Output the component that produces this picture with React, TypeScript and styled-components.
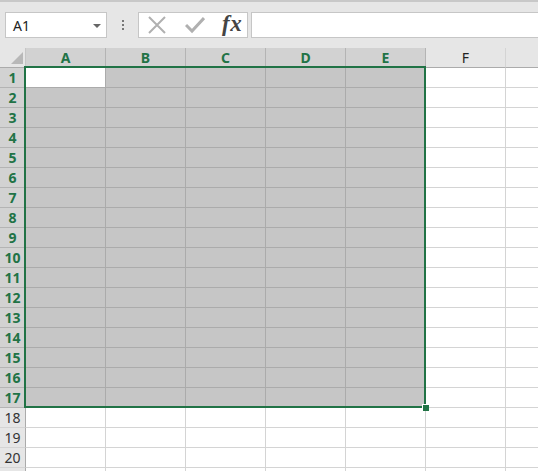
import React from "react";
import styled, { createGlobalStyle } from "styled-components";

const Global = createGlobalStyle`
  html, body { margin: 0; padding: 0; }
  body {
    width: 538px; height: 471px; overflow: hidden;
    background: #ffffff;
    font-family: "Noto Sans", "Open Sans", sans-serif;
  }
`;

const Page = styled.div`
  position: relative;
  width: 538px;
  height: 471px;
  overflow: hidden;
`;

const Toolbar = styled.div`
  height: 48px;
  box-sizing: border-box;
  background: #e6e6e6;
  border-top: 2px solid #c8c8c8;
  display: flex;
  align-items: flex-start;
  padding: 10px 0 0 5px;
`;

const NameBox = styled.div`
  width: 102px;
  height: 26px;
  box-sizing: border-box;
  background: #fff;
  border: 1px solid #c6c6c6;
  display: flex;
  align-items: center;
  justify-content: space-between;
  padding: 0 5px 0 7px;
  font-size: 14px;
  color: #222;
`;

const Caret = styled.span`
  width: 0;
  height: 0;
  border-left: 4px solid transparent;
  border-right: 4px solid transparent;
  border-top: 4px solid #666;
  margin-top: 1px;
`;

const Dots = styled.div`
  width: 31px;
  height: 26px;
  display: flex;
  flex-direction: column;
  align-items: center;
  justify-content: center;
  gap: 2px;
  span {
    width: 2px;
    height: 2px;
    background: #777;
  }
`;

const FxBox = styled.div`
  width: 110px;
  height: 26px;
  box-sizing: border-box;
  background: #fff;
  border: 1px solid #c6c6c6;
  display: flex;
  align-items: center;
  padding-left: 8px;
  gap: 18px;
`;

const Fx = styled.span`
  font-family: "Liberation Serif", "DejaVu Serif", serif;
  font-style: italic;
  font-weight: 700;
  font-size: 23px;
  color: #444;
  line-height: 1;
  margin-left: -1px;
  margin-top: -3px;
  letter-spacing: 0.5px;
`;

const FormulaInput = styled.div`
  flex: 1;
  height: 26px;
  margin-left: 3px;
  box-sizing: border-box;
  background: #fff;
  border: 1px solid #c6c6c6;
  border-right: none;
`;

const Grid = styled.div`
  display: grid;
  grid-template-columns: 26px repeat(7, 80px);
  grid-auto-rows: 20px;
`;

const Corner = styled.div`
  position: relative;
  background: #e6e6e6;
  box-sizing: border-box;
  border-bottom: 1px solid #ababab;
  border-right: 1px solid #c6c6c6;
  &::after {
    content: "";
    position: absolute;
    right: 2px;
    bottom: 3px;
    width: 0;
    height: 0;
    border-left: 12px solid transparent;
    border-bottom: 12px solid #b8b8b8;
  }
`;

const ColHead = styled.div<{ $sel: boolean }>`
  box-sizing: border-box;
  background: ${(p) => (p.$sel ? "#d2d2d2" : "#e6e6e6")};
  border-bottom: 1px solid #ababab;
  border-right: 1px solid ${(p) => (p.$sel ? "#b4b4b4" : "#d4d4d4")};
  display: flex;
  align-items: center;
  justify-content: center;
  font-size: 14px;
  font-weight: ${(p) => (p.$sel ? 700 : 400)};
  color: ${(p) => (p.$sel ? "#217346" : "#222")};
  padding-bottom: 1px;
`;

const RowHead = styled.div<{ $sel: boolean }>`
  box-sizing: border-box;
  background: ${(p) => (p.$sel ? "#d2d2d2" : "#e6e6e6")};
  border-bottom: 1px solid ${(p) => (p.$sel ? "#b4b4b4" : "#d4d4d4")};
  border-right: 1px solid #ababab;
  display: flex;
  align-items: center;
  justify-content: center;
  font-size: 14px;
  font-weight: ${(p) => (p.$sel ? 700 : 400)};
  color: ${(p) => (p.$sel ? "#217346" : "#333")};
  padding-bottom: 1px;
`;

const Cell = styled.div<{ $sel: boolean; $active: boolean }>`
  box-sizing: border-box;
  background: ${(p) => (p.$active ? "#ffffff" : p.$sel ? "#c6c6c6" : "#ffffff")};
  border-bottom: 1px solid ${(p) => (p.$sel ? "#ababab" : "#d4d4d4")};
  border-right: 1px solid ${(p) => (p.$sel ? "#ababab" : "#d4d4d4")};
`;

const Selection = styled.div`
  position: absolute;
  left: 24px;
  top: 66px;
  width: 402px;
  height: 342px;
  box-sizing: border-box;
  border: 2px solid #217346;
  pointer-events: none;
`;

const Handle = styled.div`
  position: absolute;
  left: 422px;
  top: 404px;
  width: 7px;
  height: 7px;
  box-sizing: border-box;
  background: #217346;
  border-left: 1px solid #fff;
  border-top: 1px solid #fff;
`;

const XIcon = () => (
  <svg width="20" height="20" viewBox="0 0 20 20">
    <path d="M2 2 L18 18 M18 2 L2 18" stroke="#b0b0b0" strokeWidth="2" fill="none" />
  </svg>
);

const CheckIcon = () => (
  <svg width="20" height="20" viewBox="0 0 20 20">
    <path d="M1 10 L7 16 L19 3" stroke="#b0b0b0" strokeWidth="3" fill="none" />
  </svg>
);

const cols = ["A", "B", "C", "D", "E", "F", "G"];
const rows = Array.from({ length: 21 }, (_, i) => i + 1);

export default function App() {
  return (
    <Page>
      <Global />
      <Toolbar>
        <NameBox>
          A1
          <Caret />
        </NameBox>
        <Dots>
          <span />
          <span />
          <span />
        </Dots>
        <FxBox>
          <XIcon />
          <CheckIcon />
          <Fx>fx</Fx>
        </FxBox>
        <FormulaInput />
      </Toolbar>
      <Grid>
        <Corner />
        {cols.map((c, i) => (
          <ColHead key={c} $sel={i < 5}>
            {i < 6 ? c : ""}
          </ColHead>
        ))}
        {rows.map((r) => (
          <React.Fragment key={r}>
            <RowHead $sel={r <= 17}>{r <= 20 ? r : ""}</RowHead>
            {cols.map((c, i) => (
              <Cell key={c} $sel={r <= 17 && i < 5} $active={r === 1 && i === 0} />
            ))}
          </React.Fragment>
        ))}
      </Grid>
      <Selection />
      <Handle />
    </Page>
  );
}
